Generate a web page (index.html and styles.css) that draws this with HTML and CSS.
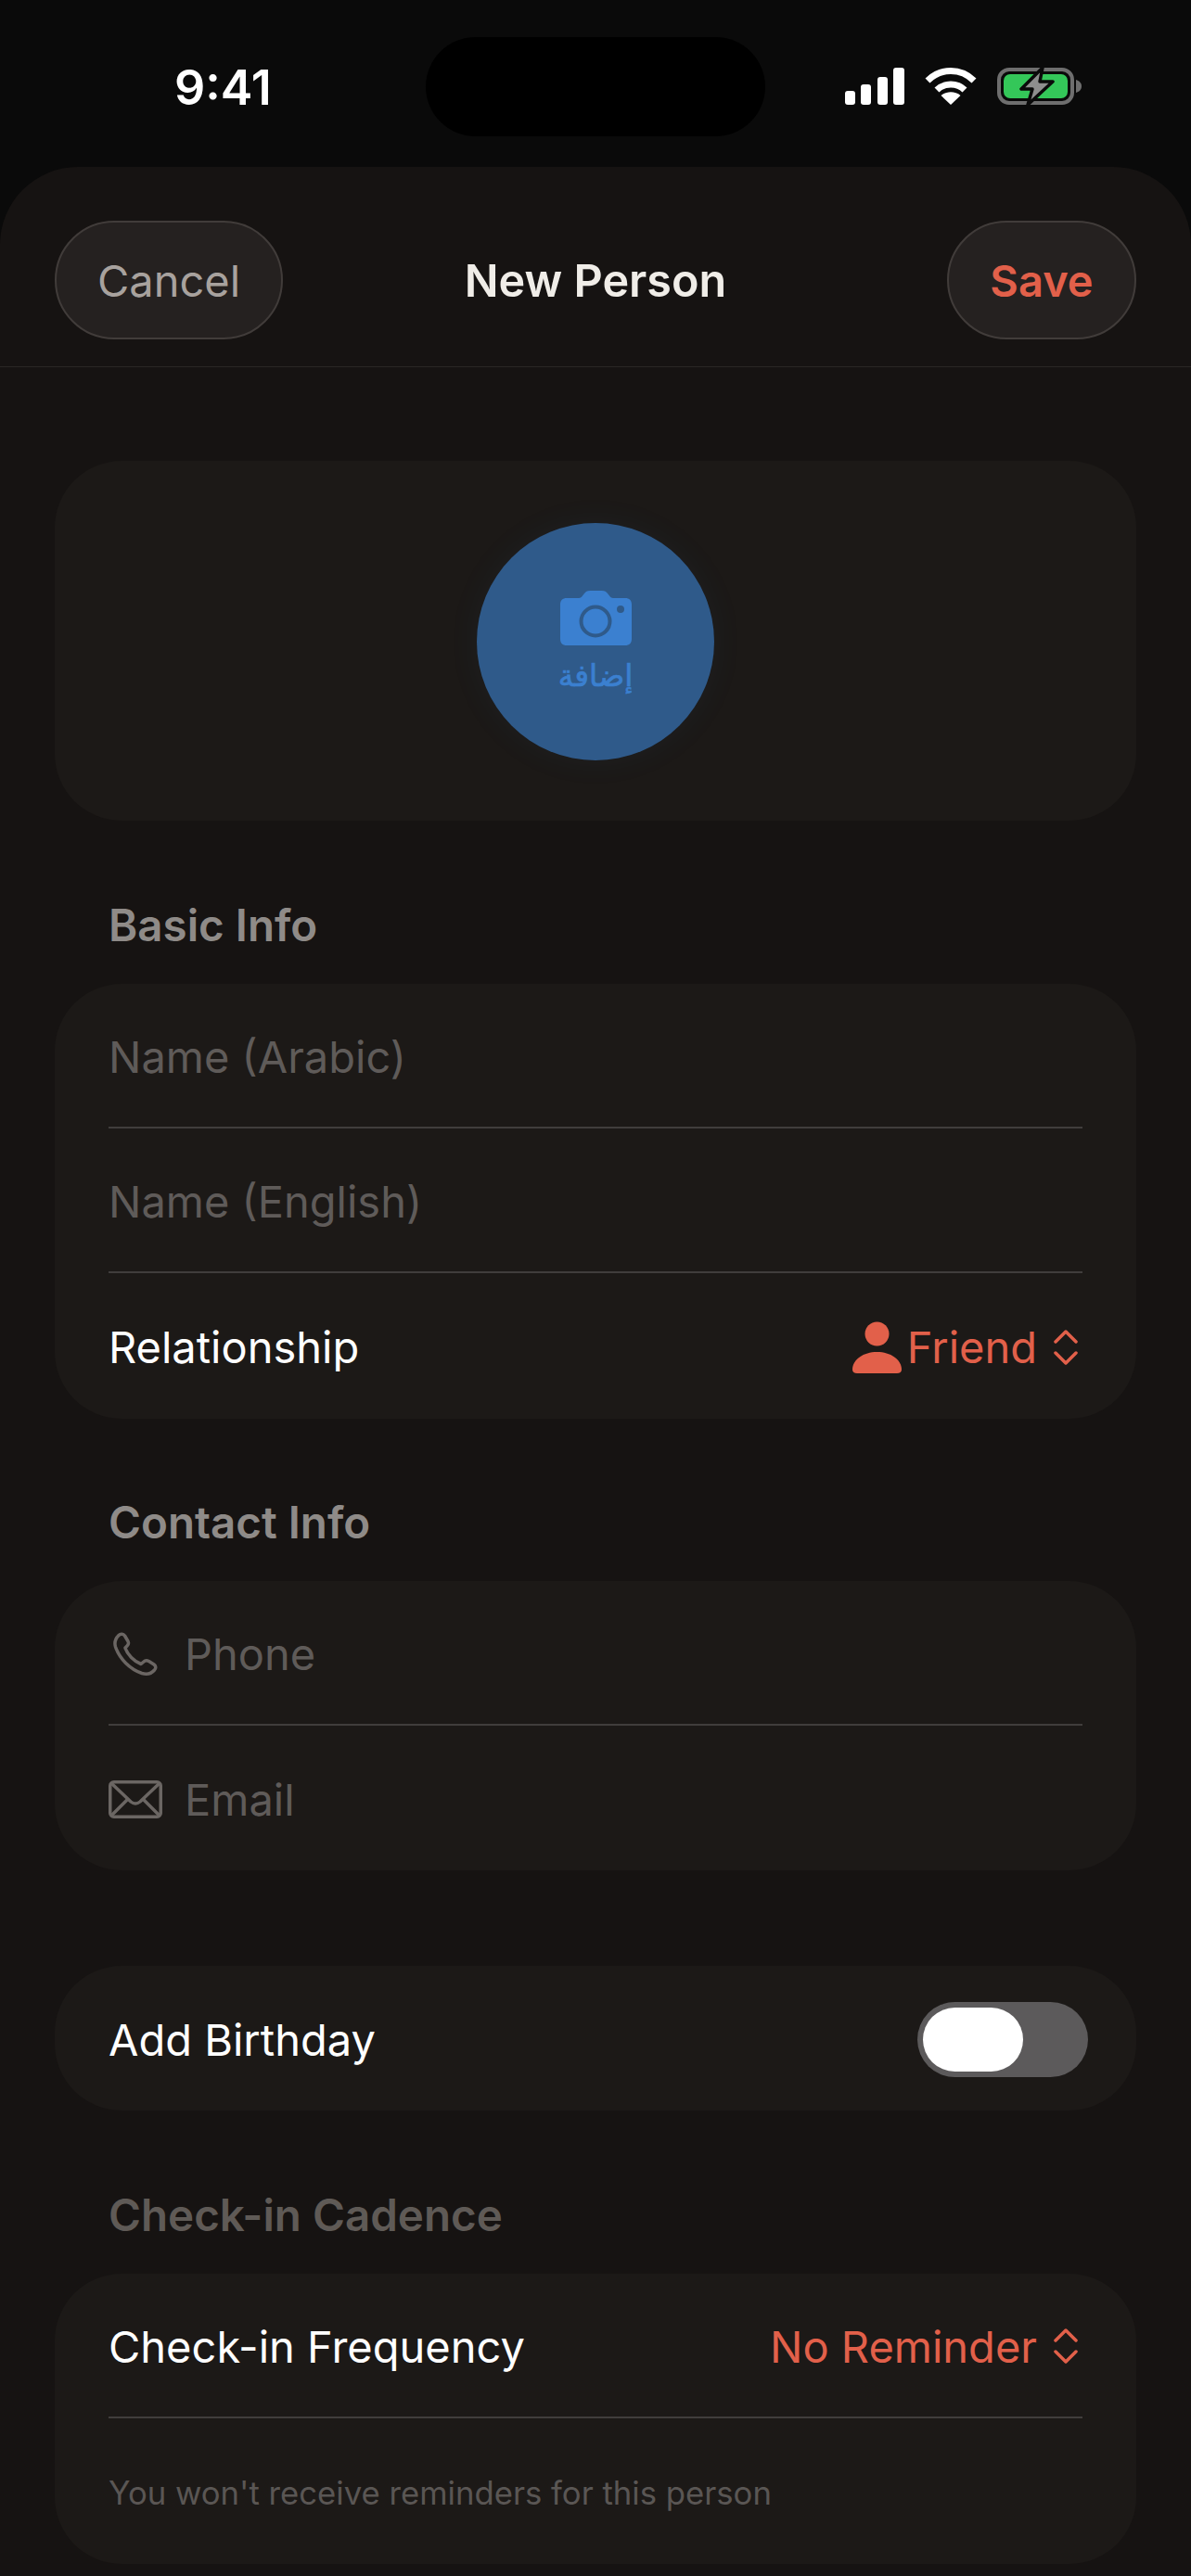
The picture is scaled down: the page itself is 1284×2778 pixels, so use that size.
FILE: index.html
```html
<!DOCTYPE html>
<html lang="en">
<head>
    <meta charset="UTF-8">
    <meta name="viewport" content="width=device-width, initial-scale=1.0">
    <title>New Person</title>
    <link rel="stylesheet" href="styles.css">
</head>
<body>
    <div class="status-bar">
        <div class="status-time">9:41</div>
        <div class="island"></div>
        <div class="status-icons">
            <svg width="64" height="40" viewBox="0 0 64 40" fill="#fff">
                <rect x="0" y="25" width="11" height="15" rx="3"/>
                <rect x="17" y="18" width="11" height="22" rx="3"/>
                <rect x="35" y="10" width="11" height="30" rx="3"/>
                <rect x="52" y="0" width="12" height="40" rx="3"/>
            </svg>
            <svg width="56" height="40" viewBox="0 0 56 40" fill="none" stroke="#fff">
                <path d="M3 14C17 0 39 0 53 14" stroke-width="7"/>
                <path d="M13 24C21 16 35 16 43 24" stroke-width="7"/>
                <path d="M28 40L17.5 30C23 25 33 25 38.5 30Z" fill="#fff" stroke="none"/>
            </svg>
            <svg width="91" height="40" viewBox="0 0 91 40" fill="none">
                <rect x="2" y="2" width="79" height="36" rx="11" stroke="#6e6e6e" stroke-width="4"/>
                <rect x="7" y="7" width="69" height="26" rx="7" fill="#34c759"/>
                <path d="M85 13C88 14 91 16 91 20C91 24 88 26 85 27Z" fill="#6e6e6e"/>
                <path d="M49 0L26 23H38L33 40L60 15H46Z" fill="#8e8e8e" stroke="#0a0a0a" stroke-width="3.5" stroke-linejoin="round"/>
            </svg>
        </div>
    </div>

    <div class="sheet">
        <div class="sheet-header">
            <div class="header-side">
                <button class="pill pill-cancel">Cancel</button>
            </div>
            <div class="sheet-title">New Person</div>
            <div class="header-side header-side-right">
                <button class="pill pill-save">Save</button>
            </div>
        </div>

        <div class="form">
            <div class="card photo-card">
                <div class="photo-circle">
                    <svg width="77" height="59" viewBox="0 0 77 59">
                        <path fill="#3b80d0" fill-rule="evenodd" d="M7 8H20C22 8 23 7 24 5.500L26 3C27.500 1 29 0 32 0H45C48 0 49.500 1 51 3L53 5.500C54 7 55 8 57 8H70C74.500 8 77 10.500 77 15V52C77 56.500 74.500 59 70 59H7C2.500 59 0 56.500 0 52V15C0 10.500 2.500 8 7 8Z"/>
                        <circle cx="38" cy="33" r="15.500" fill="none" stroke="#2f5a8a" stroke-width="4"/>
                        <circle cx="65" cy="20" r="4" fill="#2f5a8a"/>
                    </svg>
                    <div class="photo-label" lang="ar" dir="rtl">إضافة</div>
                </div>
            </div>

            <div class="section-title">Basic Info</div>
            <div class="card">
                <div class="row row-line"><span class="placeholder">Name (Arabic)</span></div>
                <div class="row row-line"><span class="placeholder">Name (English)</span></div>
                <div class="row row-tall">
                    <span class="row-label">Relationship</span>
                    <div class="picker">
                        <svg class="picker-person" width="53" height="56" viewBox="0 0 53 56" fill="#e2604a">
                            <circle cx="26.500" cy="13.500" r="13"/>
                            <path d="M5 56C2 56 0 54.500 0 52C0 41 12 33 26.500 33C41 33 53 41 53 52C53 54.500 51 56 48 56Z"/>
                        </svg>
                        <span>Friend</span>
                        <svg class="chevrons" width="26" height="38" viewBox="0 0 26 38" fill="none" stroke="#e2604a" stroke-width="3.500" stroke-linecap="round" stroke-linejoin="round">
                            <path d="M2 13L13 2L24 13"/>
                            <path d="M2 25L13 36L24 25"/>
                        </svg>
                    </div>
                </div>
            </div>

            <div class="section-title">Contact Info</div>
            <div class="card">
                <div class="row row-line">
                    <span class="row-icon">
                        <svg width="48" height="47" viewBox="0 0 48 47" fill="none" stroke="#6b6663" stroke-width="3.500" stroke-linejoin="round">
                            <path d="M6 3.500C8 1.500 11 2 12.500 4L16 10C17 12 16.500 13.500 15 15L13 17C15 24 23 32 30 34.500L33 32C34.500 30.500 36.500 30.500 38.500 31.500L44 35C46 36.500 46.500 39 44.500 41C41 45 36 46 31 44.500C18 40 7 29 2.500 16C1 11 2.500 7 6 3.500Z"/>
                        </svg>
                    </span>
                    <span class="placeholder">Phone</span>
                </div>
                <div class="row">
                    <span class="row-icon">
                        <svg width="58" height="41" viewBox="0 0 58 41" fill="none" stroke="#6b6663" stroke-width="3.500" stroke-linejoin="round">
                            <rect x="1.750" y="1.750" width="54.500" height="37.500" rx="4"/>
                            <path d="M3 3L24 23Q29 27 34 23L55 3"/>
                            <path d="M3 38L21 20M55 38L37 20"/>
                        </svg>
                    </span>
                    <span class="placeholder">Email</span>
                </div>
            </div>

            <div class="card birthday-card">
                <div class="row">
                    <span class="row-label">Add Birthday</span>
                    <div class="toggle"><div class="toggle-knob"></div></div>
                </div>
            </div>

            <div class="section-title section-title-dim">Check-in Cadence</div>
            <div class="card">
                <div class="row row-line">
                    <span class="row-label">Check-in Frequency</span>
                    <div class="picker">
                        <span>No Reminder</span>
                        <svg class="chevrons" width="26" height="38" viewBox="0 0 26 38" fill="none" stroke="#e2604a" stroke-width="3.500" stroke-linecap="round" stroke-linejoin="round">
                            <path d="M2 13L13 2L24 13"/>
                            <path d="M2 25L13 36L24 25"/>
                        </svg>
                    </div>
                </div>
                <div class="row row-tall"><span class="hint">You won't receive reminders for this person</span></div>
            </div>
        </div>
    </div>
</body>
</html>
```

FILE: styles.css
```css
* {
    box-sizing: border-box;
}
html, body {
    margin: 0;
    height: 2778px;
    overflow: hidden;
}
body {
    background-color: #0a0a0a;
    font-family: Inter, "Noto Sans", sans-serif;
    color: #fff;
}
.status-bar {
    display: flex;
    height: 180px;
    padding: 40px 0 0 188px;
}
.status-time {
    width: 271px;
    height: 107px;
    line-height: 110px;
    font-size: 52px;
    font-weight: 600;
}
.island {
    width: 366px;
    height: 107px;
    border-radius: 54px;
    background-color: #000;
}
.status-icons {
    display: flex;
    align-items: center;
    gap: 22px;
    height: 106px;
    margin-left: 86px;
}
.sheet {
    height: 2598px;
    border-radius: 84px 84px 0 0;
    background-color: #161312;
}
.sheet-header {
    display: grid;
    grid-template-columns: 1fr auto 1fr;
    align-items: center;
    padding: 58px 59px 29px;
    border-bottom: 1px solid #2a2725;
}
.header-side-right {
    display: flex;
    justify-content: flex-end;
}
.sheet-title {
    font-size: 48.500px;
    font-weight: 600;
    color: #f0ede8;
}
.pill {
    height: 128px;
    border: 2px solid #413c3a;
    border-radius: 64px;
    background-color: #252120;
    font-family: inherit;
    font-size: 47px;
}
.pill-cancel {
    width: 246px;
    color: #a8a29e;
}
.pill-save {
    width: 204px;
    font-weight: 600;
    color: #e2604a;
}
.form {
    padding: 101px 59px 0;
}
.card {
    padding: 0 58px;
    border-radius: 72px;
    background-color: #1c1917;
}
.photo-card {
    display: flex;
    justify-content: center;
    margin-bottom: 83px;
    padding: 67px 0 65px;
}
.photo-circle {
    display: flex;
    flex-direction: column;
    align-items: center;
    width: 256px;
    height: 256px;
    padding-top: 73px;
    border-radius: 50%;
    background-color: #2f5a8a;
    box-shadow: 0 0 36px rgba(59, 128, 208, 0.06);
}
.photo-label {
    margin-top: 11px;
    font-family: "DejaVu Sans", sans-serif;
    font-size: 33px;
    font-weight: 400;
    line-height: 44px;
    color: #3b80d0;
    -webkit-text-stroke: 0.7px #3b80d0;
}
.section-title {
    height: 60px;
    margin: 82px 0 33px 58px;
    line-height: 60px;
    font-size: 47.500px;
    font-weight: 600;
    color: #8f8b88;
}
.section-title-dim {
    color: #5f5a56;
}
.row {
    display: flex;
    align-items: center;
    height: 156px;
    padding-top: 2px;
    font-size: 47px;
}
.row-line {
    border-bottom: 2px solid #403d3c;
}
.row-tall {
    height: 157px;
}
.row-label {
    color: #fff;
}
.placeholder {
    color: #5f5b59;
}
.hint {
    font-size: 34.700px;
    color: #5a5654;
}
.row-icon {
    display: flex;
    align-items: center;
    justify-content: center;
    width: 58px;
    margin-right: 24px;
}
.picker {
    display: flex;
    align-items: center;
    margin-left: auto;
    margin-right: 5px;
    color: #e2604a;
}
.picker-person {
    margin-right: 6px;
}
.chevrons {
    margin-left: 18px;
}
.birthday-card {
    margin-top: 103px;
    margin-bottom: 83px;
}
.toggle {
    width: 184px;
    height: 81px;
    margin-left: auto;
    margin-right: -6px;
    padding: 6px;
    border-radius: 41px;
    background-color: #5c5a5b;
}
.toggle-knob {
    width: 108px;
    height: 69px;
    border-radius: 35px;
    background-color: #fff;
}
```
